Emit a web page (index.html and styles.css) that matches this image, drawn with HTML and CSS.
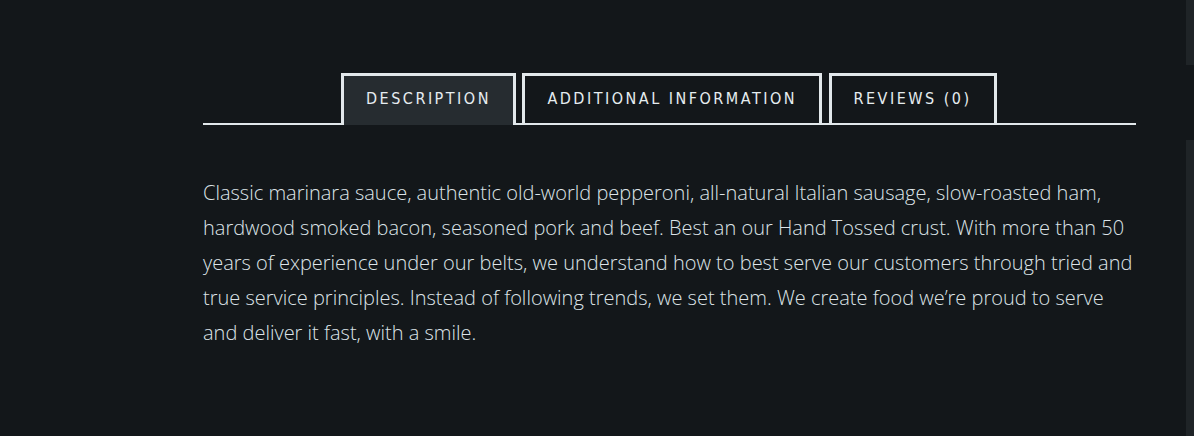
FILE: index.html
```html
<!DOCTYPE html>
<html>
<head>
<meta charset="utf-8">
<link rel="stylesheet" href="styles.css">
</head>
<body>
<div class="page">
  <section class="product-tabs">
    <ul class="tabs">
      <li class="tab active">Description</li>
      <li class="tab">Additional information</li>
      <li class="tab">Reviews (0)</li>
    </ul>
    <div class="panel">
      <p>Classic marinara sauce, authentic old-world pepperoni, all-natural Italian sausage, slow-roasted ham, hardwood smoked bacon, seasoned pork and beef. Best an our Hand Tossed crust. With more than 50 years of experience under our belts, we understand how to best serve our customers through tried and true service principles. Instead of following trends, we set them. We create food we’re proud to serve and deliver it fast, with a smile.</p>
    </div>
  </section>
  <div class="edge edge-top"></div>
  <div class="edge edge-bottom"></div>
</div>
</body>
</html>
```
FILE: styles.css
```css
html, body {
  margin: 0;
  padding: 0;
  background: #13171a;
}
.page {
  position: relative;
  width: 1194px;
  height: 436px;
  overflow: hidden;
  padding: 73px 0 0 203px;
  box-sizing: border-box;
}
.product-tabs {
  width: 933px;
}
.tabs {
  list-style: none;
  margin: 0;
  padding: 0 0 0 138px;
  display: flex;
  align-items: flex-start;
  gap: 6.5px;
  border-bottom: 2px solid #e2e8eb;
}
.tab {
  box-sizing: border-box;
  height: 50px;
  border: 3px solid #e2e8eb;
  border-bottom: 0;
  padding: 0 22px 2px;
  display: flex;
  align-items: center;
  font-family: "DejaVu Sans Condensed", "DejaVu Sans", sans-serif;
  font-stretch: condensed;
  font-size: 16px;
  letter-spacing: 2.5px;
  text-transform: uppercase;
  color: #e6edf0;
}
.tab.active {
  height: 52px;
  margin-bottom: -2px;
  padding-bottom: 4px;
  background: #262c30;
}
.panel {
  padding-top: 50px;
}
.panel p {
  margin: 0;
  font-family: "Open Sans", sans-serif;
  font-weight: 300;
  font-size: 20px;
  line-height: 35px;
  color: #dde4e8;
}
.edge {
  position: absolute;
  right: 0;
  width: 8px;
  background: #1f2427;
}
.edge-top {
  top: 0;
  height: 65px;
}
.edge-bottom {
  top: 140px;
  bottom: 0;
}
```
